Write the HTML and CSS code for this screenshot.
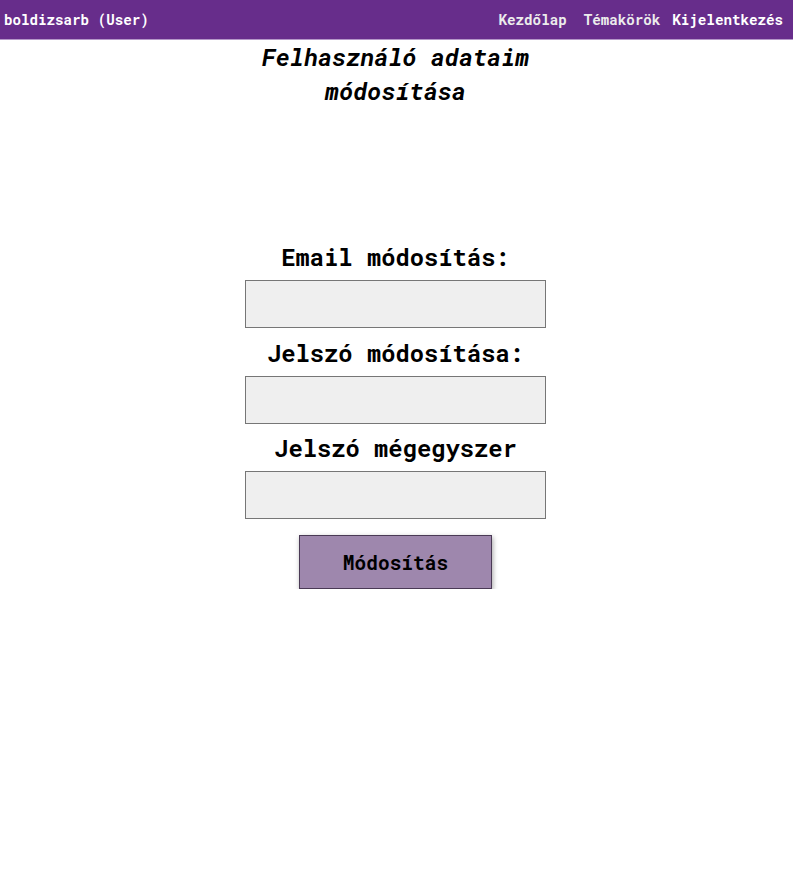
FILE: index.html
```html
<!DOCTYPE html>
<html lang="hu">
<head>
<meta charset="utf-8">
<title>Felhasználó adataim módosítása</title>
<link rel="stylesheet" href="styles.css">
</head>
<body>
<nav class="navbar">
  <span class="user">boldizsarb (User)</span>
  <div class="links">
    <a class="link home" href="#">Kezdőlap</a>
    <a class="link topics" href="#">Témakörök</a>
    <a class="link active" href="#">Kijelentkezés</a>
  </div>
</nav>
<main class="page">
  <h1 class="title">Felhasználó adataim módosítása</h1>
  <form class="form">
    <label class="label">Email módosítás:</label>
    <input class="input" type="email">
    <label class="label">Jelszó módosítása:</label>
    <input class="input" type="password">
    <label class="label">Jelszó mégegyszer</label>
    <input class="input" type="password">
    <button class="button" type="button">Módosítás</button>
  </form>
</main>
</body>
</html>
```
FILE: styles.css
```css
* { box-sizing: border-box; }
body {
  margin: 0;
  font-family: "Roboto Mono", "DejaVu Sans Mono", "Liberation Mono", monospace;
  background: #ffffff;
  color: #000;
}
.navbar {
  height: 40px;
  background: #672d8b;
  border-bottom: 1px solid #b497c8;
  display: flex;
  align-items: center;
  justify-content: space-between;
  padding: 0 10px 0 4px;
  color: #fff;
  font-weight: 700;
  font-size: 14.2px;
}
.links { display: flex; }
.link {
  color: #ececec;
  text-decoration: none;
}
.link.home { margin-right: 17px; }
.link.topics { margin-right: 12px; }
.link.active { color: #ffffff; }
.page {
  width: 301px;
  margin-left: calc(50% - 151.5px);
  display: flex;
  flex-direction: column;
  align-items: center;
}
.title {
  margin: 0;
  font-size: 24px;
  font-style: italic;
  font-weight: 700;
  line-height: 34px;
  text-align: center;
}
.form {
  margin-top: 133px;
  width: 100%;
  display: flex;
  flex-direction: column;
  align-items: center;
}
.label {
  font-size: 23.8px;
  font-weight: 700;
  line-height: 32px;
  margin-bottom: 7px;
}
.input {
  width: 301px;
  height: 48px;
  background: #efefef;
  border: 1px solid #767676;
  margin: 0 0 8.5px;
}
.button {
  margin-top: 7.5px;
  width: 193px;
  height: 54px;
  background: #9e87ad;
  border: 1px solid #4a3a55;
  box-shadow: 1px 2px 5px rgba(0,0,0,0.35);
  font-family: inherit;
  font-size: 19.5px;
  font-weight: 700;
  color: #000;
}
```
